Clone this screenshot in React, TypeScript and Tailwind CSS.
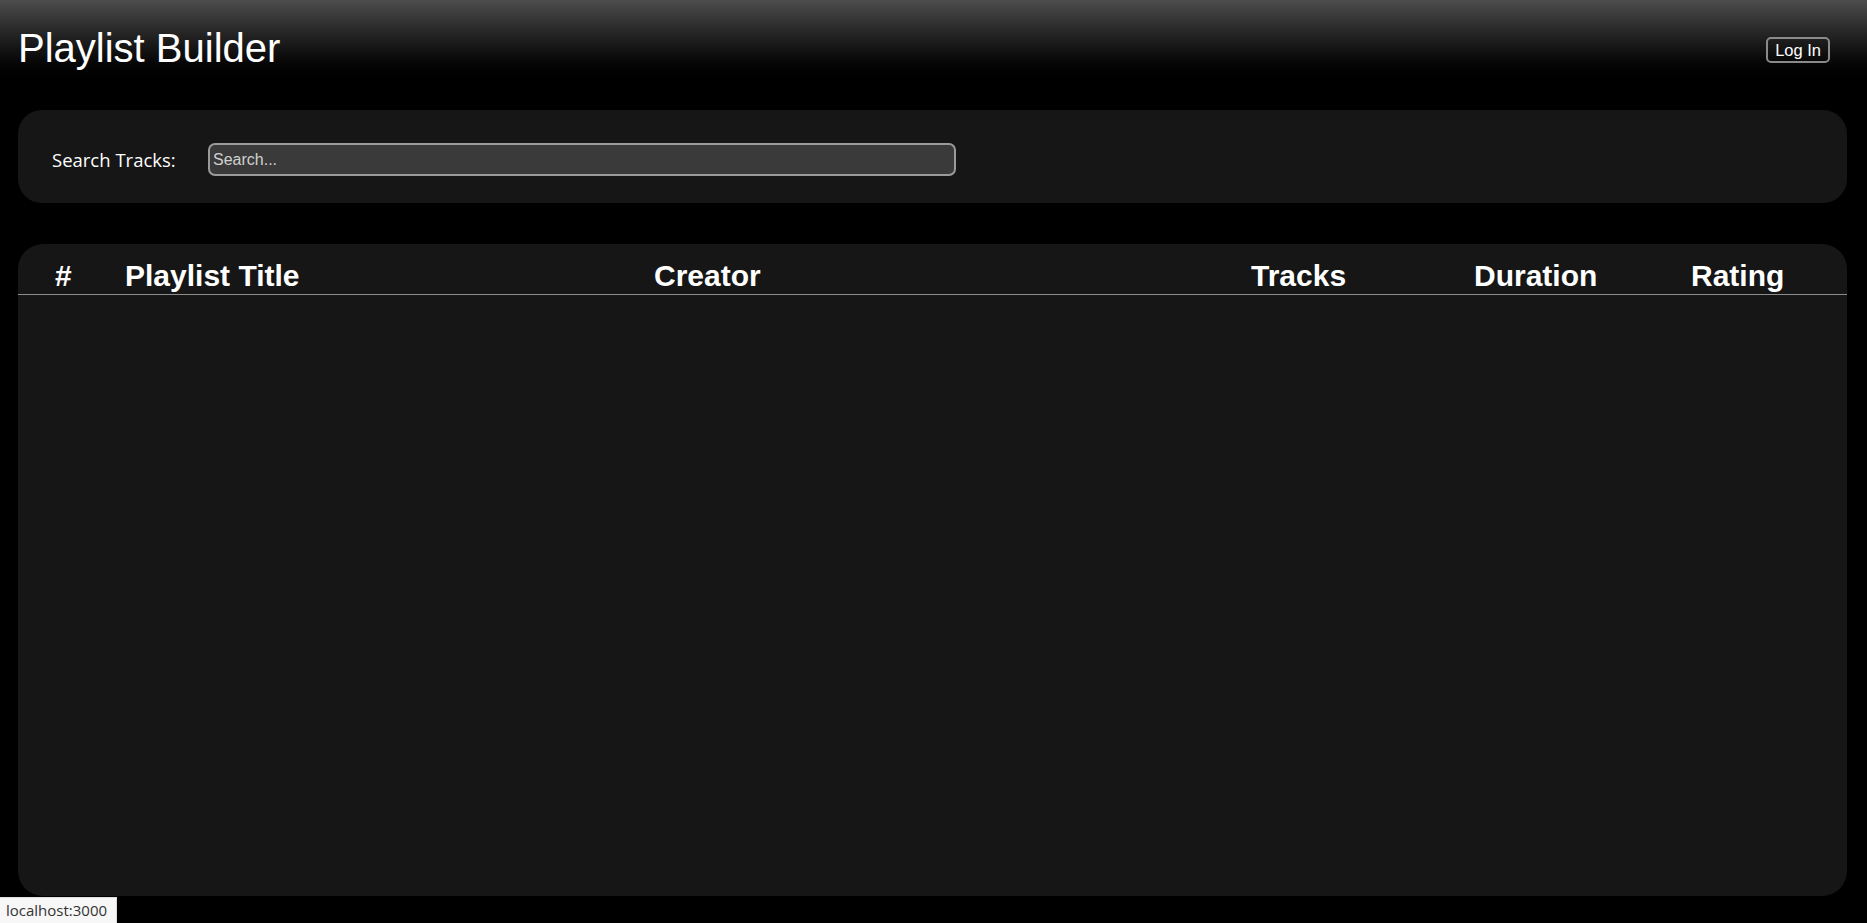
import { useState } from 'react'

// 表のヘッダー
const columns = ['#', 'Playlist Title', 'Creator', 'Tracks', 'Duration', 'Rating']

export default function App() {
  const [query, setQuery] = useState<string>('')

  return (
    <div className="relative min-h-screen bg-black font-['Liberation_Sans',Arial,sans-serif] text-white">
      <header className="flex h-[90px] items-start justify-between bg-linear-to-b from-[#4d4d4d] to-black pl-[18px] pr-[37px]">
        <h1 className="pt-[28px] text-[40px] leading-[40px] font-normal">Playlist Builder</h1>
        <button className="mt-[37px] rounded-[5px] border-2 border-[#8a8a8a] px-[7px] py-[2px] text-[16.5px] leading-[18px] text-white">
          Log In
        </button>
      </header>

      <main className="pl-[18px] pr-[20px] pb-[27px]">
        <section className="mt-[20px] h-[93px] rounded-[24px] bg-[#161616] pl-[34px] pt-[33px]">
          <div className="flex items-center">
            <label className="w-[156px] font-['Open_Sans','Noto_Sans',sans-serif] text-[18.5px] text-white">
              Search Tracks:
            </label>
            <input
              value={query}
              onChange={(e) => setQuery(e.target.value)}
              placeholder="Search..."
              className="h-[33px] w-[748px] rounded-[7px] border-2 border-[#9a9a9a] bg-[#3a3a3a] px-[3px] text-[16px] text-white outline-none placeholder:text-[#d0d0d0]"
            />
          </div>
        </section>

        <section className="mt-[41px] h-[652px] rounded-[25px] bg-[#161616]">
          <div className="grid grid-cols-[70px_529px_597px_223px_217px_1fr] border-b border-[#8c8c8c] pl-[37px] pt-[15px] pb-[2px]">
            {columns.map((c) => (
              <div key={c} className="text-[30px] leading-[33px] font-bold">
                {c}
              </div>
            ))}
          </div>
        </section>
      </main>

      <div className="fixed bottom-0 left-0 flex h-[26px] w-[117px] items-center border-t border-r border-[#dcdcdc] bg-[#f7f7f7] pl-[6px] font-['Open_Sans','Noto_Sans',sans-serif] text-[15px] text-[#333]">
        localhost:3000
      </div>
    </div>
  )
}
